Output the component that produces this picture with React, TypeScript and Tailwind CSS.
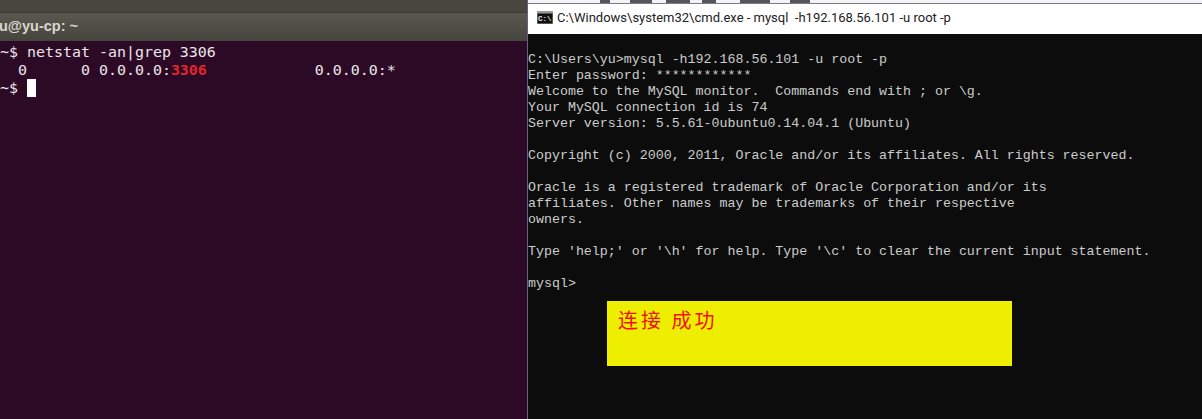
import React from 'react';

const cmdLines = [
    'C:\\Users\\yu>mysql -h192.168.56.101 -u root -p',
    'Enter password: ************',
    'Welcome to the MySQL monitor.  Commands end with ; or \\g.',
    'Your MySQL connection id is 74',
    'Server version: 5.5.61-0ubuntu0.14.04.1 (Ubuntu)',
    '',
    'Copyright (c) 2000, 2011, Oracle and/or its affiliates. All rights reserved.',
    '',
    'Oracle is a registered trademark of Oracle Corporation and/or its',
    'affiliates. Other names may be trademarks of their respective',
    'owners.',
    '',
    "Type 'help;' or '\\h' for help. Type '\\c' to clear the current input statement.",
    '',
    'mysql>',
];

// restos da janela de trás que aparecem na faixa de cima
const topScraps = [
    { id: 1, className: 'w-[10px] ml-[72px]' },
    { id: 2, className: 'w-[22px] ml-[20px]' },
    { id: 3, className: 'w-[24px] ml-[14px]' },
    { id: 4, className: 'w-[14px] ml-[12px]' },
    { id: 5, className: 'w-[30px] ml-[24px]' },
    { id: 6, className: 'w-[20px] ml-[20px]' },
];

const CmdIcon = () => (
    <svg width="16" height="13" viewBox="0 0 16 13" className="shrink-0">
        <rect x="0" y="0" width="16" height="13" fill="#9a9a9a" />
        <rect x="0.5" y="2.5" width="15" height="10" fill="#111111" />
        <text x="1" y="10" fontSize="7.5" fontWeight="bold" fontFamily="'Liberation Mono', monospace" fill="#e8e8e8">C:\</text>
    </svg>
);

const App: React.FC = () => {
    return (
        <div className="flex w-[1202px] h-[419px] overflow-hidden bg-[#2c0a26]">
            {/* Terminal Ubuntu */}
            <div className="w-[528px] shrink-0 flex flex-col border-r border-[#6a5f8a]">
                <div className="h-[13px] bg-[#47463f] border-b border-[#3a3934]"></div>
                <div className="h-[28px] bg-gradient-to-b from-[#5a5950] to-[#45443e] flex items-center overflow-hidden">
                    <span className="text-[#d8d6cd] text-[14.5px] font-bold font-['Liberation_Sans',sans-serif] ml-[-1px]">u@yu-cp: ~</span>
                </div>
                <div className="flex-1 pt-[2px] text-[#ece6ea] text-[14.95px] leading-[18px] font-['DejaVu_Sans_Mono',monospace] whitespace-pre">
                    <div>~$ netstat -an|grep 3306</div>
                    <div>  0      0 0.0.0.0:<span className="text-[#e0252f] font-bold">3306</span>            0.0.0.0:*</div>
                    <div className="flex">~$ <span className="w-[9px] h-[18px] bg-white"></span></div>
                </div>
            </div>

            {/* Janela do cmd */}
            <div className="relative flex-1 flex flex-col bg-[#0c0c0c]">
                <div className="h-[4px] bg-[#f4f4f6] border-b border-[#7c7c84] flex">
                    {topScraps.map(s => (
                        <span key={s.id} className={`h-[3px] bg-[#55555c] ${s.className}`}></span>
                    ))}
                </div>
                <div className="h-[30px] bg-white flex items-center pl-[9px] gap-[4px] pb-[3px]">
                    <CmdIcon />
                    <span className="text-[13px] text-[#222222] font-['Roboto',sans-serif] whitespace-pre">C:\Windows\system32\cmd.exe - mysql  -h192.168.56.101 -u root -p</span>
                </div>
                <div className="pt-[18px] text-[#cccccc] text-[13.3px] leading-[16px] font-['Liberation_Mono',monospace] whitespace-pre">
                    {cmdLines.map((line, idx) => (
                        <div key={idx} className="h-[16px]">{line}</div>
                    ))}
                </div>

                {/* Anotação */}
                <div className="absolute left-[79px] top-[301px] w-[405px] h-[65px] bg-[#eeee00] pl-[11px] pt-[6px] text-[#f01010] text-[20px] tracking-[3px] leading-[26px] font-['Noto_Sans_CJK_SC',sans-serif]">
                    连接 成功
                </div>
            </div>
        </div>
    );
};

export default App;
